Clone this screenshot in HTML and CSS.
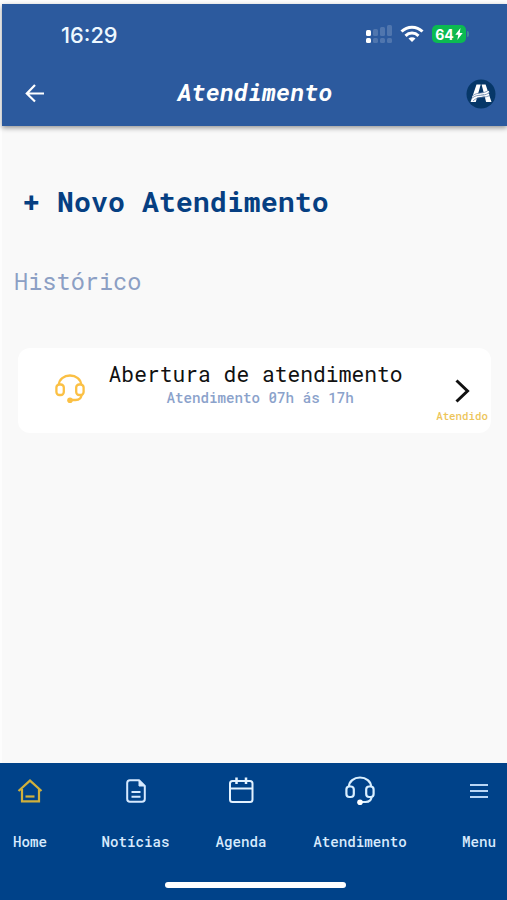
FILE: index.html
```
<!DOCTYPE html>
<html lang="pt-BR">
  <head>
    <meta charset="UTF-8" />
    <meta name="viewport" content="width=device-width, initial-scale=1.0" />
    <title>Atendimento</title>
    <link rel="stylesheet" href="styles.css">
  </head>
  <body>
    <div class="app">
      <header class="header">
        <div class="status">
          <span class="time">16:29</span>
          <svg class="signal" width="27" height="19" viewBox="0 0 27 19" fill="#fff">
            <rect x="0" y="5" width="5" height="6" rx="1.5" />
            <rect x="0" y="13" width="5" height="5" rx="1.5" />
            <g opacity=".17">
              <rect x="7" y="4" width="5" height="7" rx="1.5" />
              <rect x="7" y="13" width="5" height="5" rx="1.5" />
              <rect x="14" y="2" width="5" height="9" rx="1.5" />
              <rect x="14" y="13" width="5" height="5" rx="1.5" />
              <rect x="21" y="0" width="5" height="11" rx="1.5" />
              <rect x="21" y="13" width="5" height="5" rx="1.5" />
            </g>
          </svg>
          <svg class="wifi" width="24" height="18" viewBox="0 0 24 18" fill="none" stroke="#fff" stroke-width="3">
            <path d="M1.500 6.500C7.500 .8 16.500 .8 22.500 6.500" />
            <path d="M5.500 10.800c3.700-3.600 9.300-3.600 13 0" />
            <path d="M12 17l-3.500-3.500c2-1.800 5-1.800 7 0z" fill="#fff" stroke="none" />
          </svg>
          <span class="battery">64<svg width="8" height="12" viewBox="0 0 8 12" fill="#fff"><path d="M5.500 0L.3 6.800h3L2.300 12 7.700 4.900h-3z" /></svg></span>
          <span class="battery-tip"></span>
        </div>
        <div class="topbar">
          <svg class="back" width="20" height="20" viewBox="0 0 20 20" fill="none" stroke="#fff" stroke-width="2.200">
            <path d="M19 9.500H2M10 1L1.800 9.500l8.200 8" />
          </svg>
          <h1 class="title">Atendimento</h1>
          <svg class="logo" width="30" height="30" viewBox="0 0 30 30">
            <circle cx="15" cy="15" r="14.500" fill="#063768" />
            <path d="M10.500 5.500h4.200L9.800 23H4.600zM15.600 5.500h4L25.500 23h-5.400z" fill="#fff" />
            <path d="M7 18c5-5 9-1 16-5.500M7 20c6-5 9-1 16-5" fill="none" stroke="#fff" stroke-width="2" />
            <path d="M7 16.500c5-4 10-1 15-5M6 19.200c6-5 10-1 17-5.200M7 21.800c6-5 9-2 16-5" fill="none" stroke="#4d6f9c" stroke-width=".7" />
          </svg>
        </div>
      </header>

      <main class="content">
        <a class="new">+ Novo Atendimento</a>
        <h2 class="history">Histórico</h2>
        <div class="card">
          <svg class="card-icon" width="30" height="30" viewBox="0 0 30 30" fill="none" stroke="#fbc044" stroke-width="2.300">
            <path d="M4 10.500a11 9 0 0 1 22 0M26.500 20.500c0 4-3 5.500-6 5.500H16" />
            <rect x="1.400" y="10.500" width="7.400" height="10.500" rx="3" />
            <rect x="21.200" y="10.500" width="7.400" height="10.500" rx="3" />
            <circle cx="15" cy="26.300" r="2.800" fill="#fbc044" stroke="none" />
          </svg>
          <div class="card-text">
            <p class="card-title">Abertura de atendimento</p>
            <p class="card-sub">Atendimento 07h ás 17h</p>
          </div>
          <div class="card-status">
            <svg width="15" height="24" viewBox="0 0 15 24" fill="none" stroke="#111" stroke-width="3">
              <path d="M1.500 1.500L12.500 12l-11 10.500" />
            </svg>
            <span>Atendido</span>
          </div>
        </div>
      </main>

      <nav class="nav">
        <a class="nav-item">
          <svg width="30" height="30" viewBox="0 0 30 30" fill="none" stroke="#d0b03c" stroke-width="2.200">
            <path d="M3.500 15L15 4.600 26.500 15M7 13v12.300h17V13" />
            <path d="M10.500 20.500h9" />
          </svg>
          Home
        </a>
        <a class="nav-item">
          <svg width="30" height="30" viewBox="0 0 30 30" fill="none" stroke="#d5e9ff" stroke-width="2">
            <path d="M18 4.200H9A2.800 2.800 0 0 0 6.200 7v16A2.800 2.800 0 0 0 9 25.800h12a2.800 2.800 0 0 0 2.800-2.800V10z" stroke-linejoin="round" />
            <path d="M18 4.200V10h5.800z" fill="#d5e9ff" stroke-width="1" />
            <path d="M10.500 16h9M10.500 20.800h9" />
          </svg>
          Notícias
        </a>
        <a class="nav-item">
          <svg width="30" height="30" viewBox="0 0 30 30" fill="none" stroke="#e3f2ff" stroke-width="2">
            <rect x="4" y="5" width="22.500" height="21" rx="2.500" />
            <path d="M4 12.500h22.500" />
            <path d="M10.500 1.500v6.500M20 1.500v6.500" stroke-width="2.500" />
          </svg>
          Agenda
        </a>
        <a class="nav-item">
          <svg width="30" height="30" viewBox="0 0 30 30" fill="none" stroke="#d9efff" stroke-width="2.200">
            <path d="M4 10.500a11 9 0 0 1 22 0M26.500 20.500c0 4-3 5.500-6 5.500H16" />
            <rect x="1.400" y="10.500" width="7.400" height="10.500" rx="3" />
            <rect x="21.200" y="10.500" width="7.400" height="10.500" rx="3" />
            <circle cx="15" cy="26.300" r="2.800" fill="#fff" stroke="none" />
          </svg>
          Atendimento
        </a>
        <a class="nav-item">
          <svg width="30" height="30" viewBox="0 0 30 30" fill="none" stroke="#b9d6f5" stroke-width="2">
            <path d="M6 9h18M6 15h18M6 21h18" />
          </svg>
          Menu
        </a>
        <span class="home-bar"></span>
      </nav>
    </div>
  </body>
</html>
```
FILE: styles.css
```
* {
  box-sizing: border-box;
  margin: 0;
  padding: 0;
}
body {
  background-color: #fdfdfd;
  font-family: "Roboto Mono", "DejaVu Sans Mono", "Liberation Mono", monospace;
}
svg {
  display: block;
  flex: none;
}
.app {
  display: flex;
  flex-direction: column;
  height: 900px;
  padding: 4px 0 0 2px;
  overflow: hidden;
}
.header {
  height: 122px;
  background-color: #2c5a9e;
  box-shadow: 0 2px 5px rgba(0, 0, 0, 0.4);
  z-index: 1;
}
.status {
  display: flex;
  align-items: center;
  height: 60px;
  padding: 0 38px 0 59px;
}
.time {
  padding-top: 1px;
  color: #eef8ff;
  font-family: Inter, sans-serif;
  font-size: 21.8px;
  font-weight: 500;
}
.signal {
  margin-left: auto;
}
.wifi {
  margin: 0 8px 0 7px;
}
.battery {
  display: flex;
  align-items: center;
  justify-content: center;
  gap: 1px;
  width: 34px;
  height: 18px;
  border-radius: 5px;
  background-color: #0cba51;
  color: #fff;
  font: 700 14px Inter, sans-serif;
}
.battery-tip {
  width: 2px;
  height: 6px;
  margin-left: 1px;
  border-radius: 0 2px 2px 0;
  background-color: #3f8a96;
}
.topbar {
  display: flex;
  align-items: center;
  justify-content: space-between;
  height: 60px;
  padding: 0 11px 0 23px;
}
.title {
  padding-bottom: 4px;
  margin-right: 1px;
  color: #fff;
  font-size: 24px;
  font-style: italic;
  font-weight: 700;
}
.content {
  flex: 1;
  background-color: #f9f9f9;
}
.new {
  display: block;
  padding: 58px 0 0 21px;
  color: #063f82;
  font-size: 28.3px;
  font-weight: 700;
  line-height: 34px;
}
.history {
  padding: 49px 0 0 12px;
  color: #8c9fc4;
  font-size: 23.6px;
  font-weight: 400;
  line-height: 28px;
}
.card {
  display: flex;
  align-items: flex-start;
  height: 85px;
  margin: 53px 16px 0;
  padding: 0 3px 0 37px;
  border-radius: 12px;
  background-color: #fff;
}
.card-icon {
  margin-top: 26px;
}
.card-text {
  flex: 1;
  margin: 13px 10px 0 0;
  text-align: center;
  white-space: nowrap;
}
.card-title {
  color: #111;
  font-size: 21.3px;
  line-height: 26px;
}
.card-sub {
  padding-left: 9px;
  color: #8ba2cb;
  font-size: 14.2px;
  font-weight: 500;
  line-height: 22px;
}
.card-status {
  display: flex;
  flex-direction: column;
  align-items: center;
  gap: 7px;
  margin-top: 31px;
  color: #edc55a;
  font-size: 10.8px;
  font-weight: 500;
  line-height: 13px;
}
.nav {
  display: grid;
  grid-template-columns: 56px 155px 56px 182px 56px;
  align-content: start;
  height: 137px;
  margin-left: -2px;
  padding: 13px 0 0 2px;
  background-color: #004289;
}
.nav-item {
  display: flex;
  flex-direction: column;
  align-items: center;
  gap: 26px;
  color: #d8eafd;
  font-size: 14.2px;
  font-weight: 500;
  line-height: 20px;
  white-space: nowrap;
}
.home-bar {
  grid-column: 1 / -1;
  width: 181px;
  height: 6px;
  margin: 30px 0 0 163px;
  border-radius: 3px;
  background-color: #fff;
}
```
